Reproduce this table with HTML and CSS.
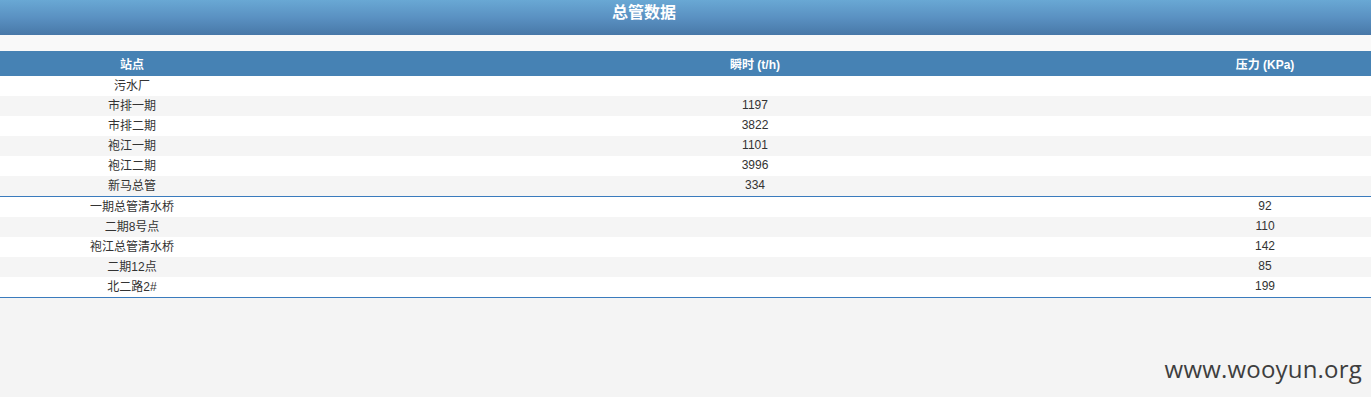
FILE: index.html
```html
<!DOCTYPE html>
<html lang="zh">
<head>
<meta charset="utf-8">
<title>总管数据</title>
<link rel="stylesheet" href="styles.css">
</head>
<body>
<div class="page">
  <div class="titlebar">总管数据</div>
  <div class="band"></div>
  <div class="grid head">
    <div class="cell">站点</div>
    <div class="cell">瞬时 (t/h)</div>
    <div class="cell">压力 (KPa)</div>
    <div class="cell"></div>
  </div>
  <div class="group">
    <div class="grid row"><div class="cell">污水厂</div><div class="cell"></div><div class="cell"></div><div class="cell"></div></div>
    <div class="grid row alt"><div class="cell">市排一期</div><div class="cell">1197</div><div class="cell"></div><div class="cell"></div></div>
    <div class="grid row"><div class="cell">市排二期</div><div class="cell">3822</div><div class="cell"></div><div class="cell"></div></div>
    <div class="grid row alt"><div class="cell">袍江一期</div><div class="cell">1101</div><div class="cell"></div><div class="cell"></div></div>
    <div class="grid row"><div class="cell">袍江二期</div><div class="cell">3996</div><div class="cell"></div><div class="cell"></div></div>
    <div class="grid row alt"><div class="cell">新马总管</div><div class="cell">334</div><div class="cell"></div><div class="cell"></div></div>
  </div>
  <div class="group">
    <div class="grid row"><div class="cell">一期总管清水桥</div><div class="cell"></div><div class="cell">92</div><div class="cell"></div></div>
    <div class="grid row alt"><div class="cell">二期8号点</div><div class="cell"></div><div class="cell">110</div><div class="cell"></div></div>
    <div class="grid row"><div class="cell">袍江总管清水桥</div><div class="cell"></div><div class="cell">142</div><div class="cell"></div></div>
    <div class="grid row alt"><div class="cell">二期12点</div><div class="cell"></div><div class="cell">85</div><div class="cell"></div></div>
    <div class="grid row"><div class="cell">北二路2#</div><div class="cell"></div><div class="cell">199</div><div class="cell"></div></div>
  </div>
  <div class="watermark">www.wooyun.org</div>
</div>
</body>
</html>
```
FILE: styles.css
```css
html, body {
  margin: 0;
  padding: 0;
}
body {
  background: #f4f4f4;
  font-family: "Liberation Sans", Arial, "Noto Sans CJK SC", sans-serif;
  font-size: 12px;
  color: #333333;
}
.page {
  position: relative;
  height: 397px;
  overflow: hidden;
}
.titlebar {
  height: 35px;
  box-sizing: border-box;
  padding: 4px 83px 0 0;
  background: linear-gradient(to bottom, #69a8d4 0%, #5a91c2 50%, #4878a8 100%);
  color: #ffffff;
  font-family: "Liberation Sans", "Noto Sans CJK SC", sans-serif;
  font-weight: bold;
  font-size: 16px;
  line-height: 18px;
  text-align: center;
}
.band {
  height: 16px;
  background: #f9f9f9;
}
.grid {
  display: grid;
  grid-template-columns: 264px 982px 38px 1fr;
}
.cell {
  display: flex;
  justify-content: center;
  align-items: center;
  white-space: nowrap;
  min-width: 0;
}
.head {
  height: 25px;
  background: #4682b4;
  color: #ffffff;
  font-weight: bold;
  font-size: 12px;
}
.group {
  border-bottom: 1px solid #3a7bbd;
}
.row {
  height: 20px;
  background: #ffffff;
}
.row .cell {
  padding-bottom: 3px;
  box-sizing: border-box;
}
.row.alt {
  background: #f5f5f5;
}
.watermark {
  position: absolute;
  right: 9px;
  top: 352px;
  font-family: "Open Sans", "DejaVu Sans", sans-serif;
  font-size: 24px;
  color: #3e3e3e;
  letter-spacing: 0.2px;
}
```
